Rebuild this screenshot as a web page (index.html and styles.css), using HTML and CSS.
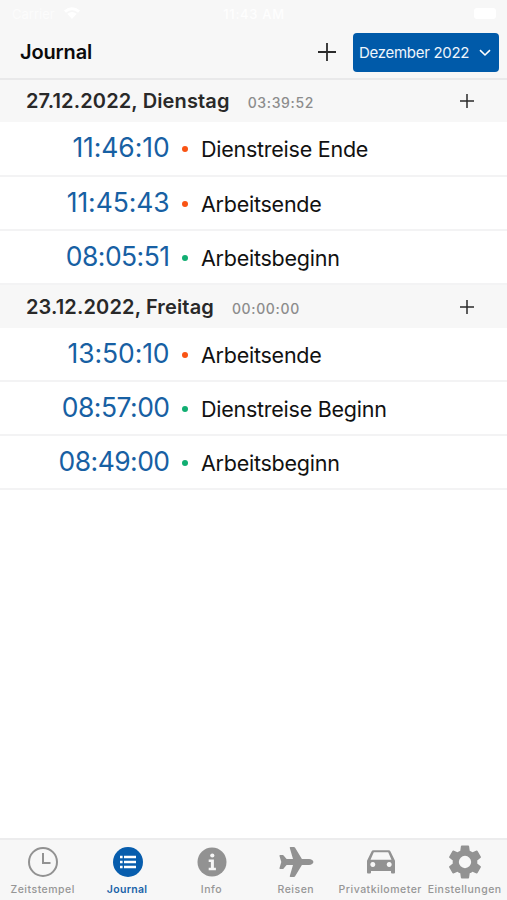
FILE: index.html
```html
<!DOCTYPE html>
<html lang="de">
<head>
<meta charset="utf-8">
<title>Journal</title>
<link rel="stylesheet" href="styles.css">
</head>
<body>
<div class="status">
  <div class="carrier"><span>Carrier</span><svg width="18" height="13" viewBox="0 0 18 13"><path d="M1 4.5Q9-2 17 4.5L15 6.7Q9 2 3 6.7ZM4.3 7.8Q9 4 13.7 7.8L9 13Z"/></svg></div>
  <span class="clock">11:43 AM</span>
  <i class="battery"></i>
</div>
<header class="bar">
  <h1>Journal</h1>
  <svg class="plus" width="20" height="20" viewBox="0 0 20 20"><path d="M10 1v18M1 10h18"/></svg>
  <button class="month"><span class="m-text">Dezember 2022</span><svg width="12" height="8" viewBox="0 0 12 8"><path d="M1 1.2l5 4.800 5-4.800"/></svg></button>
</header>
<main>
  <section>
    <div class="day"><h2>27.12.2022, Dienstag</h2><span class="total">03:39:52</span><svg class="plus" width="16" height="16" viewBox="0 0 16 16"><path d="M8 1v14M1 8h14"/></svg></div>
    <div class="row"><time class="ones">11:46:10</time><i class="dot red"></i><span>Dienstreise Ende</span></div>
    <div class="row"><time class="ones">11:45:43</time><i class="dot red"></i><span>Arbeitsende</span></div>
    <div class="row"><time>08:05:51</time><i class="dot"></i><span>Arbeitsbeginn</span></div>
  </section>
  <section>
    <div class="day"><h2>23.12.2022, Freitag</h2><span class="total">00:00:00</span><svg class="plus" width="16" height="16" viewBox="0 0 16 16"><path d="M8 1v14M1 8h14"/></svg></div>
    <div class="row"><time class="ones">13:50:10</time><i class="dot red"></i><span>Arbeitsende</span></div>
    <div class="row"><time>08:57:00</time><i class="dot"></i><span>Dienstreise Beginn</span></div>
    <div class="row"><time>08:49:00</time><i class="dot"></i><span>Arbeitsbeginn</span></div>
  </section>
</main>
<nav>
  <a><svg width="36" height="36" viewBox="0 0 36 36"><g fill="none" stroke="#929292" stroke-width="2"><circle cx="18" cy="18" r="14"/><path d="M18 9v10h7.500"/></g></svg><span>Zeitstempel</span></a>
  <a class="active"><svg width="36" height="36" viewBox="0 0 36 36"><circle cx="18" cy="18" r="15"/><path fill="none" stroke="#fff" stroke-width="2.400" d="M10 13h2.600M14 13h12M10 18h2.600M14 18h12M10 23h2.600M14 23h12"/></svg><span>Journal</span></a>
  <a><svg width="36" height="36" viewBox="0 0 36 36"><circle cx="18" cy="18" r="14.500"/><g fill="#f7f7f7"><circle cx="18.300" cy="11.500" r="2.100"/><path d="M14.700 15.500h5.200v8.300h2v2.400h-7.200v-2.400h2.200v-5.900h-2.200z"/></g></svg><span>Info</span></a>
  <a><svg width="36" height="36" viewBox="0 0 36 36"><path d="M12.500 3h3.400q.8 0 1.200.7l6.800 11.400H31c2.400 0 4.400 1.400 4.400 2.900S33.400 20.900 31 20.900h-7.100L17.100 32.300q-.4.7-1.200.7h-3.400q-1 0-.7-1l3.200-11.100H8.600l-3 3.700q-.3.500-.9.500H2.200q-1 0-.7-1L3.300 18l-1.800-6.100q-.3-1 .7-1h2.500q.6 0 .9.500l3 3.700H15L11.800 4q-.3-1 .7-1z"/></svg><span>Reisen</span></a>
  <a><svg width="36" height="36" viewBox="0 0 36 36"><path fill-rule="evenodd" d="M8.500 7.500Q9 6.200 10.500 6.200h15q1.500 0 2 1.300l4.500 9.300v11.700q0 1-1 1h-2q-1 0-1-1V27H8v1.500q0 1-1 1H5q-1 0-1-1V16.800zM10.800 8.200L7.500 15.800h21L25.200 8.200zM9.800 18a2.500 2.500 0 1 0 .01 0zM26.200 18a2.500 2.500 0 1 0 .01 0z"/></svg><span>Privatkilometer</span></a>
  <a><svg width="36" height="36" viewBox="0 0 24 24"><path transform="translate(12 12) scale(1.140) translate(-12 -12)" d="M19.140 12.940c.04-.3.060-.61.060-.94s-.02-.64-.07-.94l2.030-1.580a.49.490 0 0 0 .12-.61l-1.920-3.320a.488.488 0 0 0-.59-.22l-2.390.96c-.5-.38-1.030-.7-1.620-.94L14.400 2.810a.484.484 0 0 0-.48-.41h-3.840c-.24 0-.43.170-.47.410l-.36 2.540c-.59.240-1.130.57-1.620.94l-2.390-.96a.48.480 0 0 0-.59.220L2.740 8.870c-.12.210-.08.470.12.610l2.030 1.580c-.05.300-.09.630-.09.940s.02.640.07.940l-2.030 1.580a.49.490 0 0 0-.12.610l1.920 3.320c.12.220.37.290.59.220l2.390-.96c.5.380 1.030.7 1.620.94l.36 2.540c.05.240.24.410.48.410h3.840c.24 0 .44-.17.470-.41l.36-2.540c.59-.24 1.130-.56 1.620-.94l2.390.96c.22.080.47 0 .59-.22l1.920-3.320a.49.490 0 0 0-.12-.61zM12 15.600a3.600 3.600 0 1 1 0-7.200 3.600 3.600 0 0 1 0 7.200z"/></svg><span>Einstellungen</span></a>
</nav>
</body>
</html>
```

FILE: styles.css
```css
* { box-sizing: border-box; }
body { margin: 0; height: 900px; display: flex; flex-direction: column; background: #fff; color: #111; font-family: Inter, "Liberation Sans", sans-serif; overflow: hidden; }
h1, h2 { margin: 0; font-weight: 600; white-space: nowrap; }
svg { display: block; flex: none; }
.status { height: 27px; background: #f7f7f7; color: #fff; display: flex; align-items: center; justify-content: space-between; padding: 0 11px 0 12px; font-size: 13px; }
.carrier { display: flex; gap: 8px; width: 90px; }
.carrier span { color: #fcfcfc; }
.carrier svg { fill: #fff; }
.clock { font-weight: 500; letter-spacing: .7px; color: #fefefe; }
.battery { width: 22px; height: 11px; background: #fff; border-radius: 3px; margin-left: 68px; }
.bar { height: 53px; background: #f7f7f7; border-bottom: 2px solid #e9e9ea; display: flex; align-items: center; padding: 0 8px 0 20px; }
h1 { font-size: 20px; color: #0b0b0b; letter-spacing: -.15px; flex: 1; margin-top: -1px; }
.plus { fill: none; stroke: #2b2b2b; stroke-width: 1.800; }
.bar .plus { margin-top: -1px; }
.day .plus { stroke-width: 1.500; }
.month { font: 400 15px Inter, sans-serif; color: #eef5fc; background: #005aa9; border: 0; border-radius: 4px; width: 146px; height: 39px; margin-left: 16px; padding: 0 8px 0 6px; display: flex; align-items: center; justify-content: space-between; white-space: nowrap; letter-spacing: -.3px; }
.month svg { fill: none; stroke: #fff; stroke-width: 1.600; }
.day { height: 42px; background: #f7f7f7; display: flex; align-items: center; padding: 0 32px 0 26px; }
section + section .day { height: 43px; }
h2 { font-size: 20px; color: #292929; letter-spacing: .14px; }
.total { color: #8c8c8c; font-size: 14px; font-weight: 500; margin: 3px auto 0 18px; letter-spacing: .65px; }
.row { height: 54px; border-bottom: 2px solid #f3f3f4; display: flex; align-items: center; font-size: 21.500px; letter-spacing: -.25px; white-space: nowrap; padding-top: 1px; }
section:first-child .row:nth-child(2) { height: 55px; padding-top: 0; }
time { width: 169.500px; text-align: right; color: #1760a3; font-size: 26.500px; letter-spacing: -.55px; margin-top: -3px; }
.ones { letter-spacing: -.1px; }
.dot { width: 6px; height: 6px; border-radius: 50%; background: #11ae72; margin: 0 13px 0 12.500px; }
.red { background: #f95414; }
nav { margin-top: auto; height: 62px; background: #f7f7f7; border-top: 2px solid #ececed; display: grid; grid-template-columns: repeat(6, 84.400px); color: #969696; }
nav a { display: flex; flex-direction: column; align-items: center; padding-top: 4px; padding-left: 2px; font-size: 10.500px; font-weight: 500; white-space: nowrap; }
nav span { margin-top: 3px; line-height: 14px; letter-spacing: .5px; margin-left: -1px; }
nav svg { fill: #929292; }
.active { color: #1762a8; font-weight: 600; }
.active svg { fill: #075dad; }
.active span { letter-spacing: .3px; }
```
